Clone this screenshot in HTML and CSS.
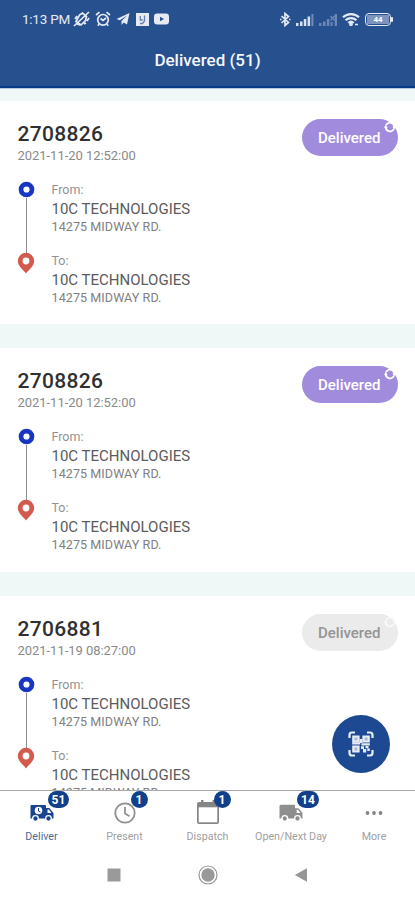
FILE: index.html
```html
<!DOCTYPE html>
<html lang="en">
<head>
<meta charset="utf-8">
<title>Delivered</title>
<link rel="stylesheet" href="styles.css">
</head>
<body>
<svg class="defs" aria-hidden="true">
  <symbol id="origin" viewBox="0 0 18 18"><circle cx="9" cy="9" r="5.8" fill="#fff" stroke="#1736c1" stroke-width="5"/></symbol>
  <symbol id="pin" viewBox="0 0 18 22"><path fill="#d35b4d" fill-rule="evenodd" d="M9 .8a8.2 8.2 0 0 0-8.2 8.2c0 5 5.400 8.800 8.200 12.400 2.800-3.600 8.200-7.400 8.200-12.400A8.200 8.200 0 0 0 9 .8zM9 5.600a3.400 3.400 0 1 1 0 6.800 3.400 3.400 0 0 1 0-6.800z"/></symbol>
  <symbol id="sync" viewBox="0 0 12 12"><circle cx="6" cy="6" r="4.300" fill="none" stroke="currentColor" stroke-width="1.800" stroke-dasharray="11.500 2.010" transform="rotate(20 6 6)"/><path fill="currentColor" d="M8.300 5.200H12l-1.700 3zM3.700 6.800H0l1.700-3z"/></symbol>
</svg>
<header class="header">
  <div class="status">
    <span class="time">1:13 PM</span>
    <svg class="mute" width="18" height="18" viewBox="0 0 18 18" fill="none" stroke="#e5eaf3" stroke-width="1.700"><path d="M3 11.500l3.500-6.500 3-2 4 3.500-1 4-4.500 4.500zM4 14l3 1M1 16L16 2M2 9l2-3M14 11l2-3M11 14l2-1"/></svg>
    <svg class="alarm" width="16" height="16" viewBox="0 0 16 16" fill="none" stroke="#e5eaf3" stroke-width="1.700"><circle cx="8" cy="8.800" r="5.300"/><path d="M1 4l3.500-2.800M15 4l-3.500-2.800M5.500 7.500L8 9.500l3-2.500M4 13.300l-1.200 1.400M12 13.300l1.200 1.400"/></svg>
    <svg class="plane" width="14" height="14" viewBox="0 0 14 14" fill="#e5eaf3"><path d="M13.500 1L.5 7l3.300 1.300L11 3.500 5.500 9v4l2.200-2.500 3.300 2z"/></svg>
    <svg class="note" width="13" height="13" viewBox="0 0 13 13"><path fill="#e5eaf3" d="M0 0h13v13H0z"/><path fill="none" stroke="#6880ac" stroke-width="1.300" d="M4.300 3v4h2.500M8.500 2.500v5.500L6.500 10.500H4"/></svg>
    <svg class="tube" width="15" height="12" viewBox="0 0 15 12"><rect y=".5" width="15" height="11" rx="3.200" fill="#e5eaf3"/><path fill="#27508f" d="M6 3.700L10 6 6 8.300z"/></svg>
    <span class="spacer"></span>
    <svg class="bt" width="11" height="15" viewBox="0 0 11 15" fill="none" stroke="#e5eaf3" stroke-width="1.700"><path d="M1.500 4l7 6.500L5 13.500v-12l3.500 3-7 6.500M0 7.500h1.500M9 7.500h1.500"/></svg>
    <svg class="sig" width="18" height="13" viewBox="0 0 18 13" fill="#d9e1ee"><path d="M0 10h2.500v3H0zM4 8.500h2.500V13H4zM7.800 6h2.500v7H7.800zM11.600 3.500h2.500V13h-2.500z"/><path fill="#718bb8" d="M15.400 1h2v12h-2z"/></svg>
    <svg class="sig2" width="18" height="13" viewBox="0 0 18 13" fill="#6d88b6"><path d="M0 10h2.500v3H0zM4 8.500h2.500V13H4zM7.800 6h2.500v7H7.800zM11.600 9h2v4h-2zM15.600 1H18v12h-2.400z"/><path fill="none" stroke="#6d88b6" stroke-width="1.300" d="M11.500 3l4 4.500m0-4.500l-4 4.500"/></svg>
    <svg class="wifi" width="18" height="14" viewBox="0 0 18 14" fill="none" stroke="#e5eaf3" stroke-width="2.200"><path d="M1 5.300a11.500 11.500 0 0 1 16 0M3.600 8.200a7.800 7.800 0 0 1 10.800 0M6.300 11a4 4 0 0 1 5.400 0"/><circle cx="9" cy="12.300" r=".8"/><path stroke-width="1.500" d="M13 12.500h3"/></svg>
    <span class="battery"><span class="charge">44</span></span>
  </div>
  <h1 class="title">Delivered (51)</h1>
</header>
<main class="list">
  <article class="card">
    <div class="top"><div><h2 class="id">2708826</h2><p class="date">2021-11-20 12:52:00</p></div>
      <span class="pill">Delivered<svg class="sync"><use href="#sync"/></svg></span></div>
    <div class="route">
      <div class="track"><svg class="origin"><use href="#origin"/></svg><i class="line"></i><svg class="pin"><use href="#pin"/></svg></div>
      <div class="stops">
        <section class="stop"><p class="label">From:</p><p class="name">10C TECHNOLOGIES</p><p class="addr">14275 MIDWAY RD.</p></section>
        <section class="stop"><p class="label">To:</p><p class="name">10C TECHNOLOGIES</p><p class="addr">14275 MIDWAY RD.</p></section>
      </div>
    </div>
  </article>
  <article class="card">
    <div class="top"><div><h2 class="id">2708826</h2><p class="date">2021-11-20 12:52:00</p></div>
      <span class="pill">Delivered<svg class="sync"><use href="#sync"/></svg></span></div>
    <div class="route">
      <div class="track"><svg class="origin"><use href="#origin"/></svg><i class="line"></i><svg class="pin"><use href="#pin"/></svg></div>
      <div class="stops">
        <section class="stop"><p class="label">From:</p><p class="name">10C TECHNOLOGIES</p><p class="addr">14275 MIDWAY RD.</p></section>
        <section class="stop"><p class="label">To:</p><p class="name">10C TECHNOLOGIES</p><p class="addr">14275 MIDWAY RD.</p></section>
      </div>
    </div>
  </article>
  <article class="card">
    <div class="top"><div><h2 class="id">2706881</h2><p class="date">2021-11-19 08:27:00</p></div>
      <span class="pill muted">Delivered<svg class="sync"><use href="#sync"/></svg></span></div>
    <div class="route">
      <div class="track"><svg class="origin"><use href="#origin"/></svg><i class="line"></i><svg class="pin"><use href="#pin"/></svg></div>
      <div class="stops">
        <section class="stop"><p class="label">From:</p><p class="name">10C TECHNOLOGIES</p><p class="addr">14275 MIDWAY RD.</p></section>
        <section class="stop"><p class="label">To:</p><p class="name">10C TECHNOLOGIES</p><p class="addr">14275 MIDWAY RD.</p></section>
      </div>
    </div>
  </article>
  <button class="scan" aria-label="Scan">
    <svg width="26" height="26" viewBox="0 0 26 26"><path fill="none" stroke="#e8edf5" stroke-width="2.200" d="M1.500 7V4q0-2.500 2.500-2.500h3M19 1.500h3q2.500 0 2.500 2.500v3M24.500 19v3q0 2.500-2.500 2.500h-3M7 24.500H4q-2.500 0-2.500-2.500v-3"/><g fill="#a9b7d5" stroke="#e8edf5" stroke-width="2.200"><path d="M5.300 5.500h5.200v5H5.300zM15.500 5.500h5.200v5h-5.200zM5.300 15.500h5.200v5H5.300z"/></g><path fill="#e8edf5" d="M4.200 11.300h8v2.200h-8zM11.500 8h3v4h-3zM13.500 12.300h8.300v2.200h-8.300zM13 15.300h3v2.700h-3zM17.500 15h3v2.200h-3zM15 18h3.200v3.600H15zM19.300 17.500h2.500V20h-2.500z"/></svg>
  </button>
</main>
<nav class="tabs">
  <a class="tab t1 active"><span class="icon"><svg width="24" height="18" viewBox="0 0 24 18"><path fill="#174390" d="M1.500 1H15q1 0 1 1v2h3.300L23.500 9v5.500H.5V2q0-1 1-1z"/><path fill="#fff" d="M17.500 5.500h1.300L21.500 9h-4z"/><circle cx="8.500" cy="6.500" r="3.800" fill="#fff"/><path d="M8.500 4v3l2 1" fill="none" stroke="#174390"/><g fill="#174390" stroke="#fff" stroke-width="1.300"><circle cx="5.500" cy="14.500" r="2.800"/><circle cx="18.500" cy="14.500" r="2.800"/></g></svg><b class="badge">51</b></span><span class="text">Deliver</span></a>
  <a class="tab t2"><span class="icon"><svg width="22" height="22" viewBox="0 0 22 22" fill="none" stroke="#919191" stroke-width="1.800"><circle cx="11" cy="11" r="9.700"/><path d="M11 5v6.500l4.500 2.700"/></svg><b class="badge">1</b></span><span class="text">Present</span></a>
  <a class="tab t3"><span class="icon"><svg width="24" height="25" viewBox="0 0 24 25"><path fill="#858585" d="M3 2h2V0h2.500v2h9V0H19v2h2q2 0 2 2v18q0 2-2 2H3q-2 0-2-2V4q0-2 2-2z"/><path fill="#fff" d="M2.700 7.300h18.600v15H2.700z"/></svg><b class="badge">1</b></span><span class="text">Dispatch</span></a>
  <a class="tab t4"><span class="icon"><svg width="24" height="18" viewBox="0 0 24 18"><path fill="#8e8e8e" d="M2 .8h13q1 0 1 1v2.400h3.500L23.500 9v5.500H.5V2.300Q.5.8 2 .8z"/><path fill="#fff" d="M17.700 5.700h1.300L21.500 9h-3.800z"/><g fill="#8e8e8e" stroke="#fff" stroke-width="1.300"><circle cx="5.800" cy="14.500" r="2.800"/><circle cx="18.500" cy="14.500" r="2.800"/></g></svg><b class="badge">14</b></span><span class="text">Open/Next Day</span></a>
  <a class="tab t5"><span class="icon"><svg width="18" height="6" viewBox="0 0 18 6" fill="#858585"><circle cx="2.500" cy="3" r="1.900"/><circle cx="9" cy="3" r="1.900"/><circle cx="15.500" cy="3" r="1.900"/></svg></span><span class="text">More</span></a>
</nav>
<footer class="system">
  <svg width="14" height="20" viewBox="0 0 14 20"><path fill="#9a9a9a" d="M.5 3.500h13v13H.5z"/></svg>
  <svg width="20" height="20" viewBox="0 0 20 20"><circle cx="10" cy="10" r="9" fill="none" stroke="#979797" stroke-width="1.200"/><circle cx="10" cy="10" r="6.700" fill="#999"/></svg>
  <svg width="14" height="20" viewBox="0 0 14 20"><path fill="#969696" d="M13 3.200v13.600L.8 10z"/></svg>
</footer>
</body>
</html>
```
FILE: styles.css
```css
* { box-sizing: border-box; }
body { margin: 0; width: 415px; height: 900px; display: flex; flex-direction: column; overflow: hidden; background: #fff; font-family: Roboto, "Liberation Sans", sans-serif; }
h1, h2, p { margin: 0; }
svg { display: block; flex: none; }
.defs { position: absolute; width: 0; height: 0; }

.header { flex: none; height: 88px; background: #27508f; border-bottom: 2px solid #063c87; color: #f4f7fb; }
.status { height: 38px; padding: 0 21px 0 22px; display: flex; align-items: center; }
.time { width: 48px; font-size: 13.5px; letter-spacing: -0.25px; white-space: nowrap; color: #e5eaf3; }
.mute { margin-left: 3px; }
.alarm { margin-left: 4px; }
.plane { margin-left: 5px; }
.note { margin-left: 6px; }
.tube { margin-left: 5px; }
.spacer { flex: 1; }
.sig { margin-left: 5px; }
.sig2 { margin-left: 5px; }
.wifi { margin-left: 5px; }
.battery { position: relative; width: 26px; height: 13px; margin-left: 5px; margin-right: 3px; padding: 1px; border: 1.5px solid #e5eaf3; border-radius: 4px; display: flex; }
.battery::after { content: ""; position: absolute; right: -3px; top: 3px; width: 2px; height: 5px; border-radius: 1px; background: #e5eaf3; }
.charge { flex: 1; background: #7d94be; font-size: 8px; line-height: 9px; font-weight: 700; text-align: center; color: #fff; }
.title { font-size: 17px; font-weight: 500; line-height: 20px; padding-top: 12px; text-align: center; }

.list { position: relative; flex: none; height: 702px; padding-top: 12px; border-top: 1px solid #b9c9de; display: flex; flex-direction: column; gap: 24px; overflow: hidden; background: #f0f8f7; }
.card { flex: none; height: 223.4px; padding: 18px 17px 0 17.5px; background: #fff; }
.top { height: 61px; display: flex; justify-content: space-between; }
.id { margin-top: 3px; font-size: 21px; line-height: 25px; font-weight: 500; letter-spacing: 0.3px; color: #303030; }
.date { font-size: 13px; line-height: 18px; letter-spacing: -0.04px; color: #8a8a8a; }
.pill { position: relative; width: 96.5px; height: 37px; border-radius: 19px; background: #a18bdc; color: #fff; font-size: 15px; font-weight: 500; line-height: 38px; padding-left: 16.5px; }
.sync { position: absolute; right: 2px; top: 2px; width: 12px; height: 12px; }
.muted { background: #ebebeb; color: #949494; }
.muted .sync { color: #f8f8f8; }
.route { display: flex; }
.track { width: 17px; margin-right: 17px; display: flex; flex-direction: column; align-items: center; }
.origin { width: 17px; height: 17px; margin-top: 1px; }
.line { width: 1px; height: 55px; background: #8a8a8a; }
.pin { width: 18px; height: 22px; margin-top: -1px; }
.stop { height: 71px; white-space: nowrap; }
.label { font-size: 12.5px; line-height: 20px; color: #929292; }
.name { font-size: 15px; line-height: 18px; color: #5b5b5b; }
.addr { font-size: 12.6px; line-height: 18px; letter-spacing: 0.05px; color: #808080; }
.scan { position: absolute; left: 332px; top: 626px; width: 58px; height: 58px; padding: 0; border: 0; border-radius: 50%; display: grid; place-items: center; background: #1d4993; }

.tabs { flex: none; height: 61px; border-top: 1px solid #aaa; display: grid; grid-template-columns: 83px 83px 83px 84px 82px; }
.tab { display: flex; flex-direction: column; align-items: center; color: #a0a0a0; }
.icon { position: relative; height: 38px; padding-top: 5px; display: grid; place-items: center; }
.text { font-size: 10.7px; line-height: 15px; white-space: nowrap; }
.active .text { color: #4c6996; }
.badge { position: absolute; left: 50%; top: 0; margin-left: 6px; min-width: 17px; height: 17px; padding: 0 4px; border-radius: 9px; background: #123f89; color: #fff; font-size: 12px; line-height: 18px; font-weight: 700; text-align: center; }
.system { flex: 1; padding: 14px 107px 0; display: flex; justify-content: space-between; align-items: flex-start; }
```
